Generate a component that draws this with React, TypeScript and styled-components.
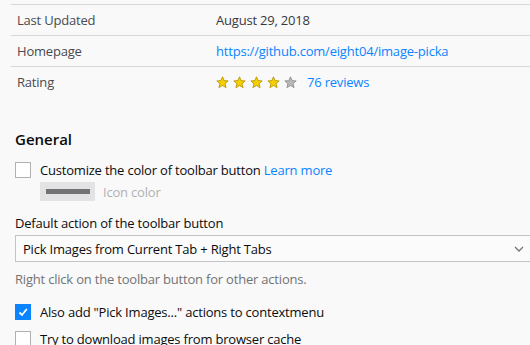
import styled, { createGlobalStyle } from 'styled-components';

const GlobalStyle = createGlobalStyle`
  html, body {
    margin: 0;
    background: #f9f9fa;
    overflow: hidden;
  }
  body {
    font-family: "Open Sans", "Liberation Sans", sans-serif;
    font-size: 13px;
    letter-spacing: -0.2px;
    color: #0c0c0d;
  }
`;

const Page = styled.div`
  width: 540px;
  padding-top: 4px;
`;

const DetailsTable = styled.div`
  margin-left: 11px;
  border-top: 1px solid #d7d7db;
`;

const DetailRow = styled.div<{ $last?: boolean }>`
  display: flex;
  align-items: center;
  height: 30px;
  border-bottom: ${(p) => (p.$last ? 'none' : '1px solid #d7d7db')};
`;

const DetailLabel = styled.div`
  width: 199px;
  padding-left: 6px;
  color: #4a4a4f;
`;

const DetailValue = styled.div`
  display: flex;
  align-items: center;
  gap: 10px;
  color: #38383d;
`;

const Link = styled.a`
  color: #0a84ff;
  text-decoration: none;
`;

const Stars = styled.div`
  display: flex;
  gap: 4px;
`;

const Section = styled.div`
  padding: 32px 0 0 15px;
`;

const Heading = styled.h2`
  margin: 0 0 13px;
  font-size: 15px;
  font-weight: 600;
  letter-spacing: 0;
  color: #0c0c0d;
`;

const CheckRow = styled.label`
  display: flex;
  align-items: center;
  gap: 9px;
  height: 16px;
  color: #0c0c0d;
`;

const Box = styled.span<{ $checked?: boolean }>`
  flex: none;
  display: flex;
  align-items: center;
  justify-content: center;
  width: 14px;
  height: 14px;
  border: 1px solid ${(p) => (p.$checked ? '#0a84ff' : '#b1b1b3')};
  background: ${(p) => (p.$checked ? '#0a84ff' : '#fff')};
`;

const ColorRow = styled.div`
  display: flex;
  align-items: center;
  gap: 8px;
  margin: 4px 0 0 25px;
  color: #b1b1b3;
`;

const Swatch = styled.div`
  display: flex;
  align-items: center;
  justify-content: center;
  width: 55px;
  height: 19px;
  background: #e3e3e5;
`;

const SwatchBar = styled.div`
  width: 44px;
  height: 5px;
  background: #737373;
`;

const FieldLabel = styled.div`
  margin-top: 13px;
  color: #0c0c0d;
`;

const Select = styled.div`
  display: flex;
  align-items: center;
  justify-content: space-between;
  box-sizing: border-box;
  width: 520px;
  height: 27px;
  margin-top: 3px;
  padding: 0 10px 0 7px;
  border: 1px solid #c4c4c6;
  background: #fbfbfb;
  color: #0c0c0d;
`;

const Hint = styled.div`
  margin: 8px 0 16px;
  color: #737373;
`;

const Stack = styled.div`
  display: flex;
  flex-direction: column;
  gap: 11px;
`;

const Star = ({ on }: { on: boolean }) => (
  <svg width="13" height="13" viewBox="0 0 24 24">
    <path
      d="M12 1.5l3.1 7 7.4.6-5.6 4.9 1.7 7.5L12 17.5l-6.6 4 1.7-7.5L1.5 9.1l7.4-.6z"
      fill={on ? '#f5d000' : '#b8b8b8'}
      stroke={on ? '#b58f00' : '#8a8a8a'}
      strokeWidth="1.5"
      strokeLinejoin="round"
    />
  </svg>
);

const Check = () => (
  <svg width="12" height="12" viewBox="0 0 12 12">
    <path d="M2.5 6.5l2.5 2.5 4.8-6" fill="none" stroke="#fff" strokeWidth="1.8" />
  </svg>
);

const Chevron = () => (
  <svg width="10" height="6" viewBox="0 0 10 6">
    <path d="M1 1l4 4 4-4" fill="none" stroke="#737373" strokeWidth="1.3" />
  </svg>
);

const App = () => (
  <>
    <GlobalStyle />
    <Page>
      <DetailsTable>
        <DetailRow>
          <DetailLabel>Last Updated</DetailLabel>
          <DetailValue>August 29, 2018</DetailValue>
        </DetailRow>
        <DetailRow>
          <DetailLabel>Homepage</DetailLabel>
          <DetailValue>
            <Link>https://github.com/eight04/image-picka</Link>
          </DetailValue>
        </DetailRow>
        <DetailRow $last>
          <DetailLabel>Rating</DetailLabel>
          <DetailValue>
            <Stars>
              {[0, 1, 2, 3, 4].map((i) => (
                <Star key={i} on={i < 4} />
              ))}
            </Stars>
            <Link>76 reviews</Link>
          </DetailValue>
        </DetailRow>
      </DetailsTable>

      <Section>
        <Heading>General</Heading>
        <CheckRow>
          <Box />
          <span>
            Customize the color of toolbar button <Link>Learn more</Link>
          </span>
        </CheckRow>
        <ColorRow>
          <Swatch>
            <SwatchBar />
          </Swatch>
          Icon color
        </ColorRow>
        <FieldLabel>Default action of the toolbar button</FieldLabel>
        <Select>
          <span>Pick Images from Current Tab + Right Tabs</span>
          <Chevron />
        </Select>
        <Hint>Right click on the toolbar button for other actions.</Hint>
        <Stack>
          <CheckRow>
            <Box $checked>
              <Check />
            </Box>
            <span>Also add "Pick Images..." actions to contextmenu</span>
          </CheckRow>
          <CheckRow>
            <Box />
            <span>Try to download images from browser cache</span>
          </CheckRow>
        </Stack>
      </Section>
    </Page>
  </>
);

export default App;
